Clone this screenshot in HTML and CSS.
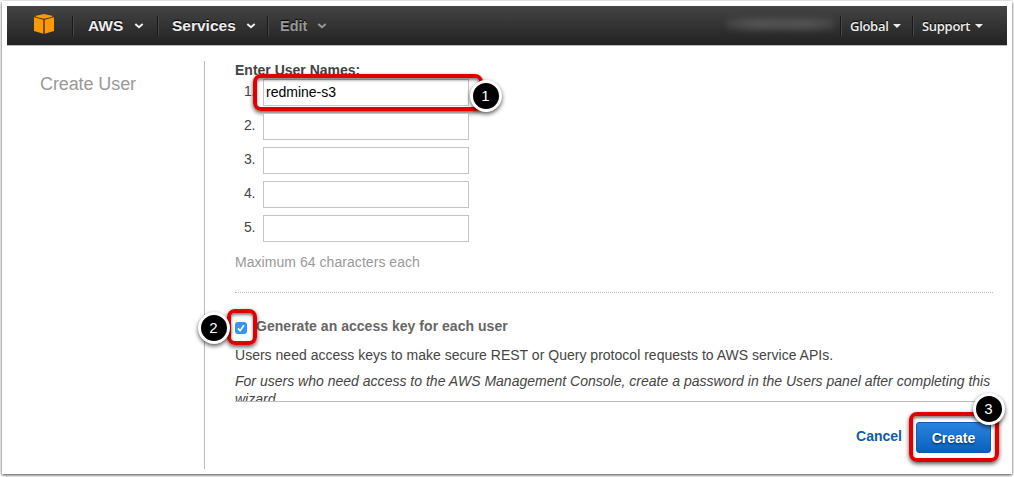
FILE: index.html
```html
<!DOCTYPE html>
<html lang="en">
<head>
<meta charset="utf-8">
<title>Create User</title>
<link rel="stylesheet" href="styles.css">
</head>
<body>
<div class="window">
  <header class="topbar">
    <svg class="logo" viewBox="0 0 20 20" width="20" height="20"><path fill="#f90" d="M10 0 19 2 17 3.2 10 4.8 3 3.2 1 2ZM0 3.2 9.3 5.8V19.8L0 17ZM20 3.2 10.7 5.8V19.8L20 17Z"/></svg>
    <nav class="menu">
      <a class="item aws"><span>AWS</span><svg class="chev" viewBox="0 0 10 6"><path d="M1.3 1 5 4.2 8.7 1"/></svg></a>
      <a class="item services"><span>Services</span><svg class="chev" viewBox="0 0 10 6"><path d="M1.3 1 5 4.2 8.7 1"/></svg></a>
      <a class="item edit"><span>Edit</span><svg class="chev" viewBox="0 0 10 6"><path d="M1.3 1 5 4.2 8.7 1"/></svg></a>
    </nav>
    <div class="account"></div>
    <nav class="menu small">
      <a class="item global"><span>Global</span><i class="caret"></i></a>
      <a class="item support"><span>Support</span><i class="caret"></i></a>
    </nav>
  </header>
  <div class="content">
    <aside class="side"><h1>Create User</h1></aside>
    <main class="main">
      <div class="scroll">
        <h2 class="label"><span>Enter User Names:</span></h2>
        <ol class="names">
          <li><span class="num">1.</span><div class="field"><input type="text" value="redmine-s3"><div class="mark mark-name"></div><b class="badge badge-one">1</b></div></li>
          <li><span class="num">2.</span><div class="field"><input type="text"></div></li>
          <li><span class="num">3.</span><div class="field"><input type="text"></div></li>
          <li><span class="num">4.</span><div class="field"><input type="text"></div></li>
          <li><span class="num">5.</span><div class="field"><input type="text"></div></li>
        </ol>
        <p class="hint"><span>Maximum 64 characters each</span></p>
        <div class="generate"><span class="check"><svg viewBox="0 0 12 12" width="12" height="12"><path d="M3 6.4 5.1 8.8 9 3.2"/></svg></span><strong>Generate an access key for each user</strong></div>
        <p class="info"><span>Users need access keys to make secure REST or Query protocol requests to AWS service APIs.</span></p>
        <p class="note"><span class="note-first">For users who need access to the AWS Management Console, create a password in the Users panel after completing this</span><br>wizard.</p>
      </div>
      <footer class="actions">
        <a class="cancel">Cancel</a>
        <div class="submit"><button>Create</button><div class="mark mark-create"></div><b class="badge badge-three">3</b></div>
      </footer>
      <div class="mark mark-check"></div><b class="badge badge-two">2</b>
    </main>
  </div>
</div>
</body>
</html>
```
FILE: styles.css
```css
* { box-sizing: border-box; }
body { margin: 0; height: 477px; overflow: hidden; background: #fff; padding: 1px 2px 0; font: 14px "Liberation Sans", Arial, sans-serif; color: #444; }
.window { height: 473px; background: #fff; padding: 5px 5px 0; box-shadow: 0 1px 3px rgba(0,0,0,.75); }
.topbar { height: 39px; display: flex; align-items: center; background: linear-gradient(#444, #222); box-shadow: 0 1px 0 #bbb; padding-left: 27px; }
.logo { margin: -3px 18px 0 0; }
.menu { display: flex; }
.item { display: flex; align-items: center; height: 20px; border-left: 1px solid #191919; box-shadow: inset 1px 0 #484848; color: #eee; font-weight: bold; font-size: 15.5px; text-shadow: 0 -1px 1px #000; white-space: nowrap; }
.chev { width: 10px; height: 6px; fill: none; stroke: currentColor; stroke-width: 2; }
.aws { width: 85px; padding-left: 15px; }
.aws .chev { margin-left: 11px; }
.services { width: 110px; padding-left: 14px; }
.services .chev { margin-left: 10px; }
.edit { padding-left: 12px; color: #999; font-size: 14.5px; }
.edit .chev { margin-left: 10px; }
.account { width: 108px; height: 27px; margin-left: auto; margin-right: 6px; background: radial-gradient(ellipse at 30% 44%, #585858 0, transparent 45%), radial-gradient(ellipse at 72% 44%, #585858 0, transparent 45%); filter: blur(2px); }
.small .item { font: 600 13px "Open Sans", "Noto Sans", sans-serif; letter-spacing: -.3px; }
.global { width: 72px; padding-left: 9px; }
.support { width: 95px; padding-left: 9px; }
.caret { margin-left: 5px; border: 4px solid transparent; border-top-color: #eee; border-bottom: 0; }
.content { display: flex; height: 424px; padding-top: 16px; }
.side { width: 198px; height: 408px; border-right: 1px solid #bbb; padding: 12px 0 0 33px; }
h1 { margin: 0; font-size: 18px; line-height: 22px; letter-spacing: -.1px; font-weight: normal; color: #999; }
.main { position: relative; width: 758px; margin-left: 30px; }
.scroll { height: 341px; border-bottom: 1px solid #bbb; overflow: hidden; white-space: nowrap; }
.label { margin: 0; height: 18px; font-size: 14px; line-height: 18px; }
.names { list-style: none; margin: 0; padding: 0 0 0 9px; display: grid; gap: 7px; }
.names li { display: flex; height: 27px; }
.num { width: 19px; line-height: 24px; letter-spacing: -.3px; }
.field { position: relative; width: 206px; }
.field input { display: block; width: 206px; height: 27px; border: 1px solid #c4c4c4; padding: 0 2px 2px; font: 14px "Liberation Sans", Arial, sans-serif; color: #000; outline: 0; }
.hint { margin: 11px 0 21px; line-height: 18px; color: #999; letter-spacing: .05px; }
.generate { border-top: 1px dotted #bbb; height: 53px; padding-top: 23px; display: flex; color: #666; line-height: 20px; letter-spacing: .03px; }
.check { width: 12px; height: 12px; margin: 6px 9px 0 0; border-radius: 3px; background: #3694f8; line-height: 0; }
.check svg { fill: none; stroke: #fff; stroke-width: 1.6; }
.info { margin: 0; line-height: 20px; letter-spacing: .015px; }
.note { margin: 7px 0 0; line-height: 18px; font-style: italic; letter-spacing: .01px; }
.actions { display: flex; justify-content: flex-end; padding: 20px 2px 0 0; }
.cancel { color: #0e5cad; font-weight: bold; line-height: 28px; margin-right: 14px; }
.submit { position: relative; }
button { display: block; width: 75px; height: 31px; border: 1px solid #0b5cb0; border-radius: 3px; background: linear-gradient(#2a83df, #0861bd); color: #fff; font: bold 14px "Liberation Sans", Arial, sans-serif; padding: 0; text-shadow: 0 1px 2px #024; }
.mark { position: absolute; border: 4px solid #e00000; border-radius: 8px; box-shadow: 0 2px 4px rgba(0,0,0,.65), inset 0 2px 3px rgba(0,0,0,.5); }
.mark-name { left: -10px; top: -5px; width: 230px; height: 37px; }
.mark-check { left: -8px; top: 248px; width: 30px; height: 36px; }
.mark-create { left: -7px; top: -10px; width: 90px; height: 50px; }
.badge { position: absolute; width: 32px; height: 32px; border: 3px solid #fff; border-radius: 50%; background: #000; color: #fff; font: 15px/26px "Liberation Sans", Arial, sans-serif; text-align: center; box-shadow: 0 2px 4px rgba(0,0,0,.65); }
.badge-one { left: 206.5px; top: .5px; }
.badge-two { left: -37.5px; top: 250.5px; }
.badge-three { left: 56.5px; top: -29.5px; }
```
